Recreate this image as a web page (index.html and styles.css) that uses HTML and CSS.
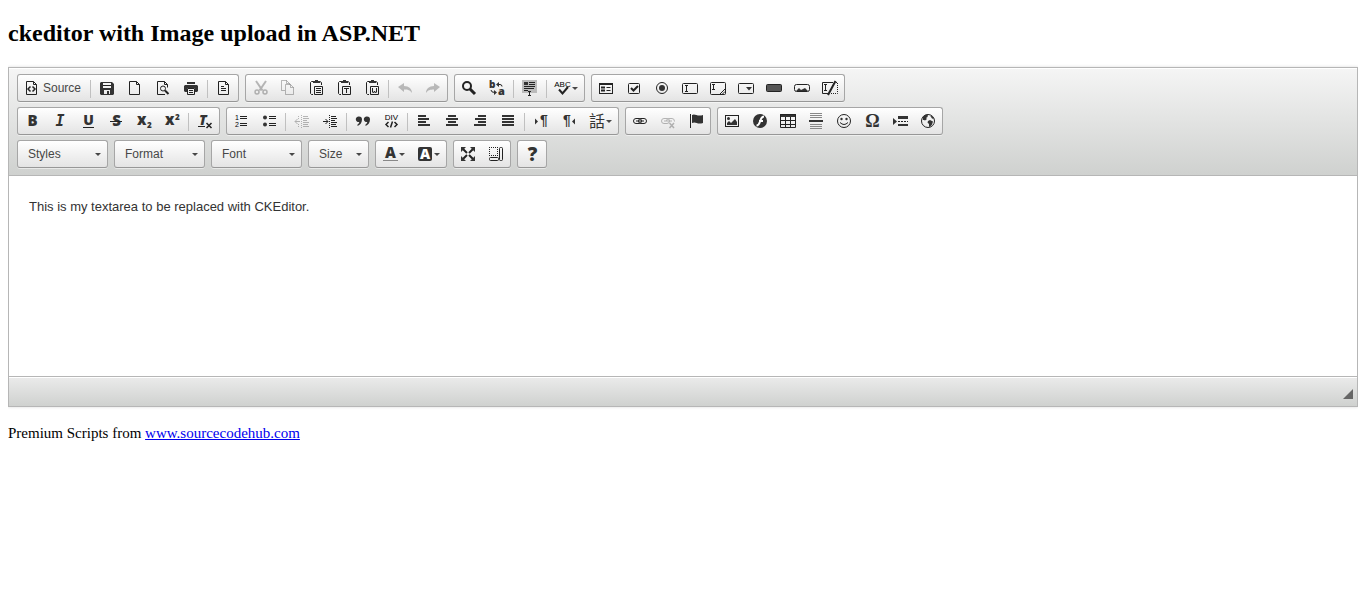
FILE: index.html
```
<!DOCTYPE html>
<html lang="en">
<head>
    <meta charset="UTF-8">
    <meta name="viewport" content="width=device-width, initial-scale=1.0">
    <title>ckeditor with Image upload in ASP.NET</title>
    <link rel="stylesheet" href="styles.css">
</head>
<body>
    <h2>ckeditor with Image upload in ASP.NET</h2>

    <div class="editor">
        <div class="toolbar">
            <div class="row">
                <!-- Document -->
                <div class="group">
                    <button type="button" class="btn" title="Source">
                        <svg viewBox="0 0 16 16"><path d="M2.5 1.5h7l3 3v10h-10zM9.5 1.5v3h3"/><path d="M6.5 6.5L4 9l2.5 2.5M8.5 6.5L11 9l-2.5 2.5" stroke-width="1.5"/></svg>
                        <span class="label">Source</span>
                    </button>
                    <span class="sep"></span>
                    <button type="button" class="btn" title="Save"><svg viewBox="0 0 16 16"><path class="solid" fill-rule="evenodd" d="M2 2h11l2 2v10l-1 1H2l-1-1V3zM4 3v5h8V3zM5 10v4h6v-4zM8 11h2v3H8z"/><path d="M4 5.5h8"/></svg></button>
                    <button type="button" class="btn" title="New Page"><svg viewBox="0 0 16 16"><path d="M2.5 1.5h7l3 3v10h-10zM9.5 1.5v3h3"/></svg></button>
                    <button type="button" class="btn" title="Preview"><svg viewBox="0 0 16 16"><path d="M10 14.5H2.500v-13h7l3 3v3M9.500 1.500v3h3"/><circle cx="8" cy="8.500" r="2.500"/><path d="M10 10.500l3.500 3.500" stroke-width="2"/></svg></button>
                    <button type="button" class="btn" title="Print"><svg viewBox="0 0 16 16"><path class="solid" d="M4 2h8v2H4zM2 5h12l1 1v5l-1 1h-2V8H4v4H2l-1-1V6z"/><path d="M4.500 8.500h7v6h-7zM6 10.500h4M6 12.500h4"/></svg></button>
                    <span class="sep"></span>
                    <button type="button" class="btn" title="Templates"><svg viewBox="0 0 16 16"><path d="M2.500 1.500h7l3 3v10h-10zM9.500 1.500v3h3M5 6.500h3M5 8.500h5M5 10.500h5"/></svg></button>
                </div>
                <!-- Clipboard -->
                <div class="group">
                    <button type="button" class="btn" title="Cut" disabled><svg viewBox="0 0 16 16"><path d="M4 1l6.500 9.500M14 1l-6.500 9.500" stroke-width="2"/><circle cx="5" cy="12" r="2" stroke-width="1.500"/><circle cx="13" cy="12" r="2" stroke-width="1.500"/></svg></button>
                    <button type="button" class="btn" title="Copy" disabled><svg viewBox="0 0 16 16"><path d="M5 10.500H1.500v-10h5l3 3v1M6.500 .5v3h3M5.500 4.500h5l3 3v7h-8zM10.500 4.500v3h3"/></svg></button>
                    <button type="button" class="btn" title="Paste"><svg viewBox="0 0 16 16"><path d="M5 14.500H3.500l-1-1V2.500l1-1H5M12 1.500l1.500 1V5M6.500 6.500h8v8h-8zM8 8.500h5M8 10.500h5M8 12.500h5"/><path class="solid" d="M5 1h2V0h3v1h2v2H5z"/></svg></button>
                    <button type="button" class="btn" title="Paste as plain text"><svg viewBox="0 0 16 16"><path d="M5 14.500H3.500l-1-1V2.500l1-1H5M12 1.500l1.500 1V5M6.500 6.500h8v8h-8zM8 8.500h5M10.500 9v4"/><path class="solid" d="M5 1h2V0h3v1h2v2H5z"/></svg></button>
                    <button type="button" class="btn" title="Paste from Word"><svg viewBox="0 0 16 16"><path d="M5 14.500H3.500l-1-1V2.500l1-1H5M12 1.500l1.500 1V5M6.500 6.500h8v8h-8zM8.500 8v4l1 1 1-2 1 2 1-1V8"/><path class="solid" d="M5 1h2V0h3v1h2v2H5z"/></svg></button>
                    <span class="sep"></span>
                    <button type="button" class="btn" title="Undo" disabled><svg viewBox="0 0 16 16"><path class="solid" d="M1 7l6-4v3c5 0 8 3 8 7-2-3-4-3.500-8-3.500V12z"/></svg></button>
                    <button type="button" class="btn" title="Redo" disabled><svg viewBox="0 0 16 16"><path class="solid" d="M15 7L9 3v3c-5 0-8 3-8 7 2-3 4-3.500 8-3.500V12z"/></svg></button>
                </div>
                <!-- Editing -->
                <div class="group">
                    <button type="button" class="btn" title="Find"><svg viewBox="0 0 16 16"><circle cx="6" cy="6" r="4" stroke-width="2"/><path d="M9 9l5 5" stroke-width="3"/></svg></button>
                    <button type="button" class="btn" title="Replace"><svg viewBox="0 0 16 16"><text x="0" y="8" font-size="10">b</text><text x="9" y="15" font-size="11">a</text><path d="M8 4.500h3q2 0 2 2M2 10q0 2.500 4 2.500"/><path class="solid" d="M10 2v5L7 4.500zM5 10v5l3-2.500z"/></svg></button>
                    <span class="sep"></span>
                    <button type="button" class="btn" title="Select All"><svg viewBox="0 0 16 16"><path class="shade" d="M0 0h15v13H0z"/><path class="solid" d="M2 2h4v3H2z"/><path d="M7 2.500h6M7 4.500h6M2 6.500h11M2 8.500h10M2 10.500h4M6 11.500h3M7.500 12v3M6 15.500h3"/></svg></button>
                    <span class="sep"></span>
                    <button type="button" class="btn" title="Spell Check As You Type"><svg viewBox="0 0 16 16"><text x="7.500" y="7" font-size="8" text-anchor="middle" class="thin">ABC</text><path d="M4 9.500l3.500 4L13 7" stroke-width="2"/></svg><span class="arrow"></span></button>
                </div>
                <!-- Forms -->
                <div class="group">
                    <button type="button" class="btn" title="Form"><svg viewBox="0 0 16 16"><rect x="1.500" y="3.500" width="13" height="10"/><path d="M1 4h14M3 7.500h4M3 10.500h4" stroke-width="2"/><path d="M8.500 7.500h4M8.500 10.500h4"/></svg></button>
                    <button type="button" class="btn" title="Checkbox"><svg viewBox="0 0 16 16"><rect x="2.500" y="3.500" width="11" height="10" rx="1"/><path d="M5 8l2.500 2.500L12 6" stroke-width="2"/></svg></button>
                    <button type="button" class="btn" title="Radio Button"><svg viewBox="0 0 16 16"><circle cx="8" cy="8" r="5.500"/><circle class="solid" cx="8" cy="8" r="3"/></svg></button>
                    <button type="button" class="btn" title="Text Field"><svg viewBox="0 0 16 16"><rect x=".5" y="3.500" width="15" height="10" rx="1"/><path d="M3 5.500h3M4.500 5.500v6M3 11.500h3"/></svg></button>
                    <button type="button" class="btn" title="Textarea"><svg viewBox="0 0 16 16"><rect x=".5" y="2.500" width="15" height="12" rx="1"/><path d="M2 4.500h3M3.500 4.500v5M2 9.500h3M10 14l5-5M12.500 14l2.500-2.500"/></svg></button>
                    <button type="button" class="btn" title="Selection Field"><svg viewBox="0 0 16 16"><rect x=".5" y="3.500" width="15" height="10" rx="1"/><path class="solid" d="M8 7h6l-3 3.500z"/></svg></button>
                    <button type="button" class="btn" title="Button"><svg viewBox="0 0 16 16"><rect class="dark" x=".5" y="4.500" width="15" height="7" rx="1"/></svg></button>
                    <button type="button" class="btn" title="Image Button"><svg viewBox="0 0 16 16"><rect x=".5" y="4.500" width="15" height="7" rx="2"/><path class="solid" d="M2 11l3-3 2 2 2-1 2-1 3 3z"/></svg></button>
                    <button type="button" class="btn" title="Hidden Field"><svg viewBox="0 0 16 16"><path d="M7 13.500H.5v-11H11M2 4.500h3M3.500 4.500v6M2 10.500h3"/><path d="M12 2.500h3.500v11H8" stroke-dasharray="1 1"/><path d="M13.500 1L6 15" stroke-width="2"/></svg></button>
                </div>
            </div>

            <div class="row">
                <!-- Basic styles -->
                <div class="group">
                    <button type="button" class="btn" title="Bold"><svg viewBox="0 0 16 16"><text x="8.500" y="13" font-size="15" text-anchor="middle">B</text></svg></button>
                    <button type="button" class="btn" title="Italic"><svg viewBox="0 0 16 16"><text x="8" y="13" font-size="15" text-anchor="middle" class="slab">I</text></svg></button>
                    <button type="button" class="btn" title="Underline"><svg viewBox="0 0 16 16"><text x="8.500" y="12" font-size="14" text-anchor="middle">U</text><path d="M3 14.500h11"/></svg></button>
                    <button type="button" class="btn" title="Strike Through"><svg viewBox="0 0 16 16"><text x="8.500" y="13" font-size="15" text-anchor="middle">S</text><path d="M2 8.500h12"/></svg></button>
                    <button type="button" class="btn" title="Subscript"><svg viewBox="0 0 16 16"><text x="1" y="12" font-size="15">x</text><text x="11" y="15" font-size="8">2</text></svg></button>
                    <button type="button" class="btn" title="Superscript"><svg viewBox="0 0 16 16"><text x="1" y="12" font-size="15">x</text><text x="11" y="7" font-size="8">2</text></svg></button>
                    <span class="sep"></span>
                    <button type="button" class="btn" title="Remove Format"><svg viewBox="0 0 16 16"><text x="2" y="12" font-size="14" font-style="italic">T</text><path d="M1 13.500h7"/><path d="M9.500 10l5 5M14.500 10l-5 5" stroke-width="1.500"/></svg></button>
                </div>
                <!-- Paragraph -->
                <div class="group">
                    <button type="button" class="btn" title="Numbered List"><svg viewBox="0 0 16 16"><text x="2" y="7" font-size="7" class="thin">1</text><text x="2" y="14" font-size="7" class="thin">2</text><path d="M7 3.500h7M7 5.500h7M7 10.500h7M7 12.500h7"/></svg></button>
                    <button type="button" class="btn" title="Bulleted List"><svg viewBox="0 0 16 16"><circle class="solid" cx="4" cy="4.500" r="2"/><circle class="solid" cx="4" cy="11.500" r="2"/><path d="M8 3.500h7M8 5.500h7M8 10.500h7M8 12.500h7"/></svg></button>
                    <span class="sep"></span>
                    <button type="button" class="btn" title="Decrease Indent" disabled><svg viewBox="0 0 16 16"><path d="M9 3.500h5M9 5.500h6M9 7.500h4M9 9.500h6M9 11.500h5M9 13.500h6M1 8.500h5M3.500 6L1 8.500 3.500 11"/><path d="M7.500 2v13M4.500 3v3M4.500 11v3" stroke-dasharray="1 1"/></svg></button>
                    <button type="button" class="btn" title="Increase Indent"><svg viewBox="0 0 16 16"><path d="M9 3.500h5M9 5.500h6M9 7.500h4M9 9.500h6M9 11.500h5M9 13.500h6M1 8.500h5M3.500 6L6 8.500 3.500 11"/><path d="M7.500 2v13" stroke-dasharray="1 1"/></svg></button>
                    <span class="sep"></span>
                    <button type="button" class="btn" title="Block Quote"><svg viewBox="0 0 16 16"><path class="solid" d="M4 3.500a3 3 0 0 1 3 3c0 3.500-2 5.500-4.500 6.500v-1.500c1.200-.7 1.700-1.500 1.700-2.500A2.800 2.800 0 1 1 4 3.500zM12 3.500a3 3 0 0 1 3 3c0 3.500-2 5.500-4.500 6.500v-1.500c1.200-.7 1.700-1.500 1.700-2.500A2.800 2.800 0 1 1 12 3.500z"/></svg></button>
                    <button type="button" class="btn" title="Create Div Container"><svg viewBox="0 0 16 16"><text x="8.500" y="7" font-size="8" text-anchor="middle" class="thin">DIV</text><path d="M5.500 9L3 11.500 5.500 14M11.500 9l2.500 2.500-2.500 2.500M9.500 8.500l-2 6" stroke-width="1.500"/></svg></button>
                    <span class="sep"></span>
                    <button type="button" class="btn" title="Align Left"><svg viewBox="0 0 16 16"><path class="solid" d="M2 2h8v2H2zM2 5h11v2H2zM2 8h8v2H2zM2 11h12v2H2z"/></svg></button>
                    <button type="button" class="btn" title="Center"><svg viewBox="0 0 16 16"><path class="solid" d="M4 2h8v2H4zM2 5h12v2H2zM4 8h8v2H4zM2 11h12v2H2z"/></svg></button>
                    <button type="button" class="btn" title="Align Right"><svg viewBox="0 0 16 16"><path class="solid" d="M6 2h8v2H6zM3 5h11v2H3zM6 8h8v2H6zM2 11h12v2H2z"/></svg></button>
                    <button type="button" class="btn" title="Justify"><svg viewBox="0 0 16 16"><path class="solid" d="M2 2h12v2H2zM2 5h12v2H2zM2 8h12v2H2zM2 11h12v2H2z"/></svg></button>
                    <span class="sep"></span>
                    <button type="button" class="btn" title="Text direction from left to right"><svg viewBox="0 0 16 16"><path class="solid" d="M2 5.500l3 3-3 3z"/><text x="7" y="12" font-size="14" class="pilcrow">¶</text></svg></button>
                    <button type="button" class="btn" title="Text direction from right to left"><svg viewBox="0 0 16 16"><text x="2" y="12" font-size="14" class="pilcrow">¶</text><path class="solid" d="M14 5.500l-3 3 3 3z"/></svg></button>
                    <button type="button" class="btn" title="Set language"><svg viewBox="0 0 16 16"><text x="0" y="14" font-size="16" class="cjk">話</text></svg><span class="arrow"></span></button>
                </div>
                <!-- Links -->
                <div class="group">
                    <button type="button" class="btn" title="Link"><svg viewBox="0 0 16 16"><rect x="1.500" y="5.500" width="8" height="5" rx="2.500"/><rect x="6.500" y="5.500" width="8" height="5" rx="2.500"/><path d="M4 8h8"/></svg></button>
                    <button type="button" class="btn" title="Unlink" disabled><svg viewBox="0 0 16 16"><rect x="1.500" y="5.500" width="8" height="5" rx="2.500"/><path d="M6.500 8q0-2.500 2.500-2.500h3q2.500 0 2.500 3M4 8h8"/><path d="M9.500 10l4.500 5M14 10l-4.500 5" stroke-width="1.500"/></svg></button>
                    <button type="button" class="btn" title="Anchor"><svg viewBox="0 0 16 16"><path d="M2.500 1v14"/><path class="solid" d="M4 2c3-2 5 2 11 0v8c-6 2-7-2-11 0z"/></svg></button>
                </div>
                <!-- Insert -->
                <div class="group">
                    <button type="button" class="btn" title="Image"><svg viewBox="0 0 16 16"><rect x="1.500" y="2.500" width="13" height="11"/><circle class="solid" cx="4.500" cy="5.500" r="1.500"/><path class="solid" d="M3 12v-2l2-2 2 2 4-4 2 3v3z"/></svg></button>
                    <button type="button" class="btn" title="Flash"><svg viewBox="0 0 16 16"><circle class="solid" cx="8" cy="8" r="7"/><path class="mark" d="M4.500 12.500c3 0 3-3 4-5.500s1.500-3.500 3.500-3.500M7 8h4"/></svg></button>
                    <button type="button" class="btn" title="Table"><svg viewBox="0 0 16 16"><path class="solid" d="M0 1h16v3H0z"/><path d="M.5 1.500h15v13H.5zM5.500 4v10M10.500 4v10M0 7.500h16M0 11.500h16"/></svg></button>
                    <button type="button" class="btn" title="Insert Horizontal Line"><svg viewBox="0 0 16 16"><path class="faint" d="M2 .5h12M2 2.500h12M2 4.500h12M2 11.500h12M2 13.500h12M2 15.500h12"/><path class="solid" d="M1 7h14v2H1z"/></svg></button>
                    <button type="button" class="btn" title="Smiley"><svg viewBox="0 0 16 16"><circle cx="8" cy="8" r="6.500"/><circle class="solid" cx="5.500" cy="6" r="1.200"/><circle class="solid" cx="10.500" cy="6" r="1.200"/><path d="M4 9.500q4 4 8 0"/></svg></button>
                    <button type="button" class="btn" title="Insert Special Character"><svg viewBox="0 0 16 16"><text x="8.500" y="14" font-size="18" text-anchor="middle" class="serif">Ω</text></svg></button>
                    <button type="button" class="btn" title="Insert Page Break for Printing"><svg viewBox="0 0 16 16"><path class="solid" d="M1 5l4 3.500L1 12z"/><path class="solid" d="M6 3h10v3H6zM6 11h10v2H6z"/><path d="M6 8.500h10" stroke-dasharray="2 1"/></svg></button>
                    <button type="button" class="btn" title="IFrame"><svg viewBox="0 0 16 16"><circle cx="8" cy="8" r="6.500"/><path class="solid" d="M2.500 4L5 2l3-.5L7.500 4 6 5l1 1-2 1.500L4 7 3 7zM8 8l2-1 3 1.500-1 3-2 2.500-1-.5V11L7.500 9.500zM10 2.500l2.500 1L14 6l-2-.5L11 4z"/></svg></button>
                </div>
            </div>

            <div class="row">
                <span class="combo"><select aria-label="Styles"><option>Styles</option></select></span>
                <span class="combo"><select aria-label="Format"><option>Format</option></select></span>
                <span class="combo"><select aria-label="Font"><option>Font</option></select></span>
                <span class="combo small"><select aria-label="Size"><option>Size</option></select></span>
                <!-- Colors -->
                <div class="group">
                    <button type="button" class="btn" title="Text Color"><svg viewBox="0 0 16 16"><text x="8.500" y="12" font-size="15" text-anchor="middle">A</text><path class="faint" d="M1 14.500h15"/></svg><span class="arrow"></span></button>
                    <button type="button" class="btn" title="Background Color"><svg viewBox="0 0 16 16"><rect class="solid" x="1" y="1" width="14" height="14" rx="2"/><text x="8" y="13" font-size="14" text-anchor="middle" class="light">A</text></svg><span class="arrow"></span></button>
                </div>
                <!-- Tools -->
                <div class="group">
                    <button type="button" class="btn" title="Maximize"><svg viewBox="0 0 16 16"><path d="M3 3l4 4M13 3L9 7M3 13l4-4M13 13L9 9" stroke-width="2"/><path class="solid" d="M1 1h5L1 6zM15 1h-5l5 5zM1 15h5l-5-5zM15 15h-5l5-5z"/></svg></button>
                    <button type="button" class="btn" title="Show Blocks"><svg viewBox="0 0 16 16"><path d="M1 1.500h9M1.500 3v7M9.500 3v7M1 9.500h9" stroke-dasharray="1 1"/><rect x="1.500" y="11.500" width="9" height="3" rx="1"/><rect x="11.500" y="1.500" width="3" height="13" rx="1"/></svg></button>
                </div>
                <!-- About -->
                <div class="group">
                    <button type="button" class="btn" title="About CKEditor"><svg viewBox="0 0 16 16"><text x="8.500" y="15" font-size="19" text-anchor="middle">?</text></svg></button>
                </div>
            </div>
        </div>

        <textarea class="content" aria-label="Editor content">This is my textarea to be replaced with CKEditor.</textarea>

        <div class="bottom">
            <span class="resizer"></span>
        </div>
    </div>

    <p>Premium Scripts from <a href="http://www.sourcecodehub.com">www.sourcecodehub.com</a></p>
</body>
</html>
```
FILE: styles.css
```
body {
    margin: 8px;
    background: #fff;
    color: #000;
    font-family: "Liberation Serif", "Times New Roman", serif;
    font-size: 15px;
}

h2 {
    margin: 12px 0 20px;
    font-size: 24px;
    line-height: 27px;
}

p {
    margin: 16px 0;
    line-height: 20px;
}

a {
    color: #0000ee;
}

.editor {
    border: 1px solid #b6b6b6;
    box-shadow: 0 0 3px rgba(0, 0, 0, 0.15);
    font-family: "Liberation Sans", Arial, sans-serif;
    font-size: 12px;
}

.toolbar {
    padding: 6px 8px 2px;
    border-bottom: 1px solid #b6b6b6;
    background: linear-gradient(#f5f5f5, #cfd1cf);
    box-shadow: inset 0 1px 0 #fff;
}

.row {
    display: flex;
    flex-wrap: wrap;
    column-gap: 6px;
}

.group,
.combo {
    box-sizing: border-box;
    height: 28px;
    margin-bottom: 5px;
    border: 1px solid #a6a6a6;
    border-bottom-color: #979797;
    border-radius: 3px;
    background: linear-gradient(#fff, #e4e4e4);
    box-shadow: 0 1px 0 rgba(255, 255, 255, 0.5);
}

.group {
    display: flex;
}

.btn {
    display: flex;
    align-items: center;
    padding: 0 6px;
    border: 0;
    background: none;
    color: #474747;
    font: inherit;
    cursor: default;
}

.btn:hover:enabled {
    background: #ccc;
}

.btn svg {
    width: 16px;
    height: 16px;
    overflow: visible;
    fill: none;
    stroke: #222;
}

.btn:disabled svg {
    opacity: 0.3;
}

.btn .solid {
    fill: #333;
    stroke: none;
}

.btn .shade {
    fill: #bbb;
    stroke: none;
}

.btn .dark {
    fill: #555;
}

.btn .faint {
    stroke: #888;
}

.btn .mark {
    stroke: #fff;
    stroke-width: 2;
}

.btn text {
    fill: #333;
    stroke: none;
    font-family: "Open Sans", sans-serif;
    font-weight: 800;
}

.btn .thin {
    font-family: "Liberation Sans", Arial, sans-serif;
    font-weight: normal;
    fill: #000;
}

.btn .slab {
    font-family: "DejaVu Sans Mono", monospace;
    font-style: italic;
}

.btn .serif {
    font-family: "Liberation Serif", serif;
}

.btn .pilcrow {
    font-family: "Liberation Sans", Arial, sans-serif;
}

.btn .cjk {
    font-family: "Noto Sans CJK TC", sans-serif;
    font-weight: normal;
}

.btn .light {
    fill: #fff;
}

.label {
    padding: 0 1px 0 3px;
}

.sep {
    width: 1px;
    height: 18px;
    margin: 5px 2px 0;
    background: #c0c0c0;
}

.arrow {
    margin-left: 1px;
    border: 3px solid transparent;
    border-top-color: #474747;
    border-bottom: 0;
}

/* Drop-downs */
.combo {
    position: relative;
    width: 91px;
}

.combo.small {
    width: 61px;
}

.combo select {
    width: 100%;
    height: 26px;
    padding: 0 10px;
    border: 0;
    background: none;
    color: #474747;
    font: inherit;
    appearance: none;
}

.combo::after {
    content: "";
    position: absolute;
    top: 12px;
    right: 6px;
    border: 3px solid transparent;
    border-top-color: #474747;
    border-bottom: 0;
    pointer-events: none;
}

.content {
    display: block;
    box-sizing: border-box;
    width: 100%;
    height: 200px;
    padding: 20px;
    border: 0;
    outline: 0;
    resize: none;
    background: #fff;
    color: #333;
    font-family: inherit;
    font-size: 13px;
    line-height: 21px;
}

.bottom {
    display: flex;
    justify-content: flex-end;
    align-items: center;
    height: 29px;
    padding: 0 4px;
    border-top: 1px solid #b6b6b6;
    background: linear-gradient(#ebebeb, #cfd1cf);
    box-shadow: inset 0 1px 0 #fff;
}

.resizer {
    border: 5px solid transparent;
    border-right-color: #666;
    border-bottom-color: #666;
    margin-top: 4px;
}
```
